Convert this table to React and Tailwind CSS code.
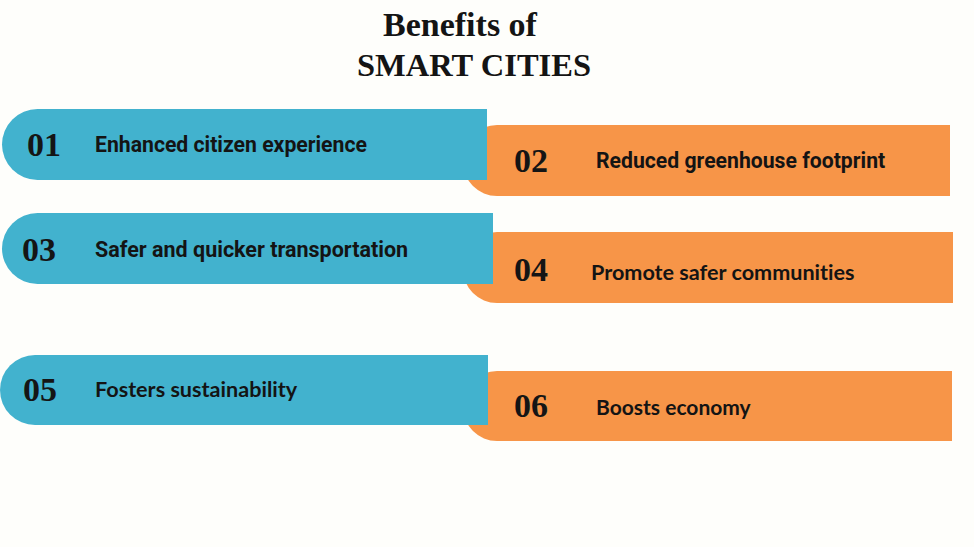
// Benefits of smart cities — paired blue/orange pills
const ROWS = [
  {
    gap: 'mt-[23px]',
    blue:   { n: '01', label: 'Enhanced citizen experience', box: 'ml-[2px] w-[485px] h-[71px] pl-[25px]', num: 'w-[68px]', font: 'roboto' },
    orange: { n: '02', label: 'Reduced greenhouse footprint', box: '-ml-[24px] mt-[16px] w-[487px] h-[71px] pl-[51px]', num: 'w-[82px]', font: 'roboto' },
  },
  {
    gap: 'mt-[17px]',
    blue:   { n: '03', label: 'Safer and quicker transportation', box: 'ml-[2px] w-[491px] h-[71px] pl-[20px] pt-[2px]', num: 'w-[73px]', font: 'robotoLg' },
    orange: { n: '04', label: 'Promote safer communities', box: '-ml-[30px] mt-[19px] w-[490px] h-[71px] pl-[51px] pt-[5px]', num: 'w-[77px]', font: 'latoLg', textPad: 'pt-[6px]' },
  },
  {
    gap: 'mt-[52px]',
    blue:   { n: '05', label: 'Fosters sustainability', box: 'w-[488px] h-[70px] pl-[23px]', num: 'w-[72px]', font: 'latoLg' },
    orange: { n: '06', label: 'Boosts economy', box: '-ml-[25px] mt-[16px] w-[489px] h-[70px] pl-[51px]', num: 'w-[82px]', font: 'lato' },
  },
];

const FONTS = {
  roboto:   "font-['Roboto',sans-serif] text-[21.2px] font-bold",
  robotoLg: "font-['Roboto',sans-serif] text-[21.5px] font-bold",
  lato:     "font-['Lato',sans-serif] text-[21px] font-bold",
  latoLg:   "font-['Lato',sans-serif] text-[21.6px] font-bold",
};

function Pill({ item, color }) {
  const bg = color === 'blue'
    ? 'bg-[#42b2ce] relative z-10 rounded-l-[36px]'
    : 'bg-[#f79548] rounded-l-[34px]';
  return (
    <div className={`${bg} ${item.box} shrink-0 flex items-center`}>
      <span className={`${item.num} shrink-0 font-['Liberation_Serif',serif] font-bold text-[34px] leading-none text-[#151515]`}>
        {item.n}
      </span>
      <span className={`${FONTS[item.font]} ${item.textPad ?? ''} leading-none text-[#141414] whitespace-nowrap [font-variant-ligatures:none]`}>
        {item.label}
      </span>
    </div>
  );
}

export default function App() {
  return (
    <div className="w-[974px] h-[547px] overflow-hidden bg-[#fefefb]">
      {/* Title */}
      <div className="pt-[4px] pr-[26px] flex flex-col items-center font-['Liberation_Serif',serif] font-bold leading-[41px] text-[#141414]">
        <p className="pr-[28px] text-[34px]">Benefits of</p>
        <p className="text-[32.5px]">SMART CITIES</p>
      </div>

      {/* Pairs */}
      {ROWS.map((row) => (
        <div key={row.blue.n} className={`${row.gap} flex items-start`}>
          <Pill item={row.blue} color="blue" />
          <Pill item={row.orange} color="orange" />
        </div>
      ))}
    </div>
  );
}
